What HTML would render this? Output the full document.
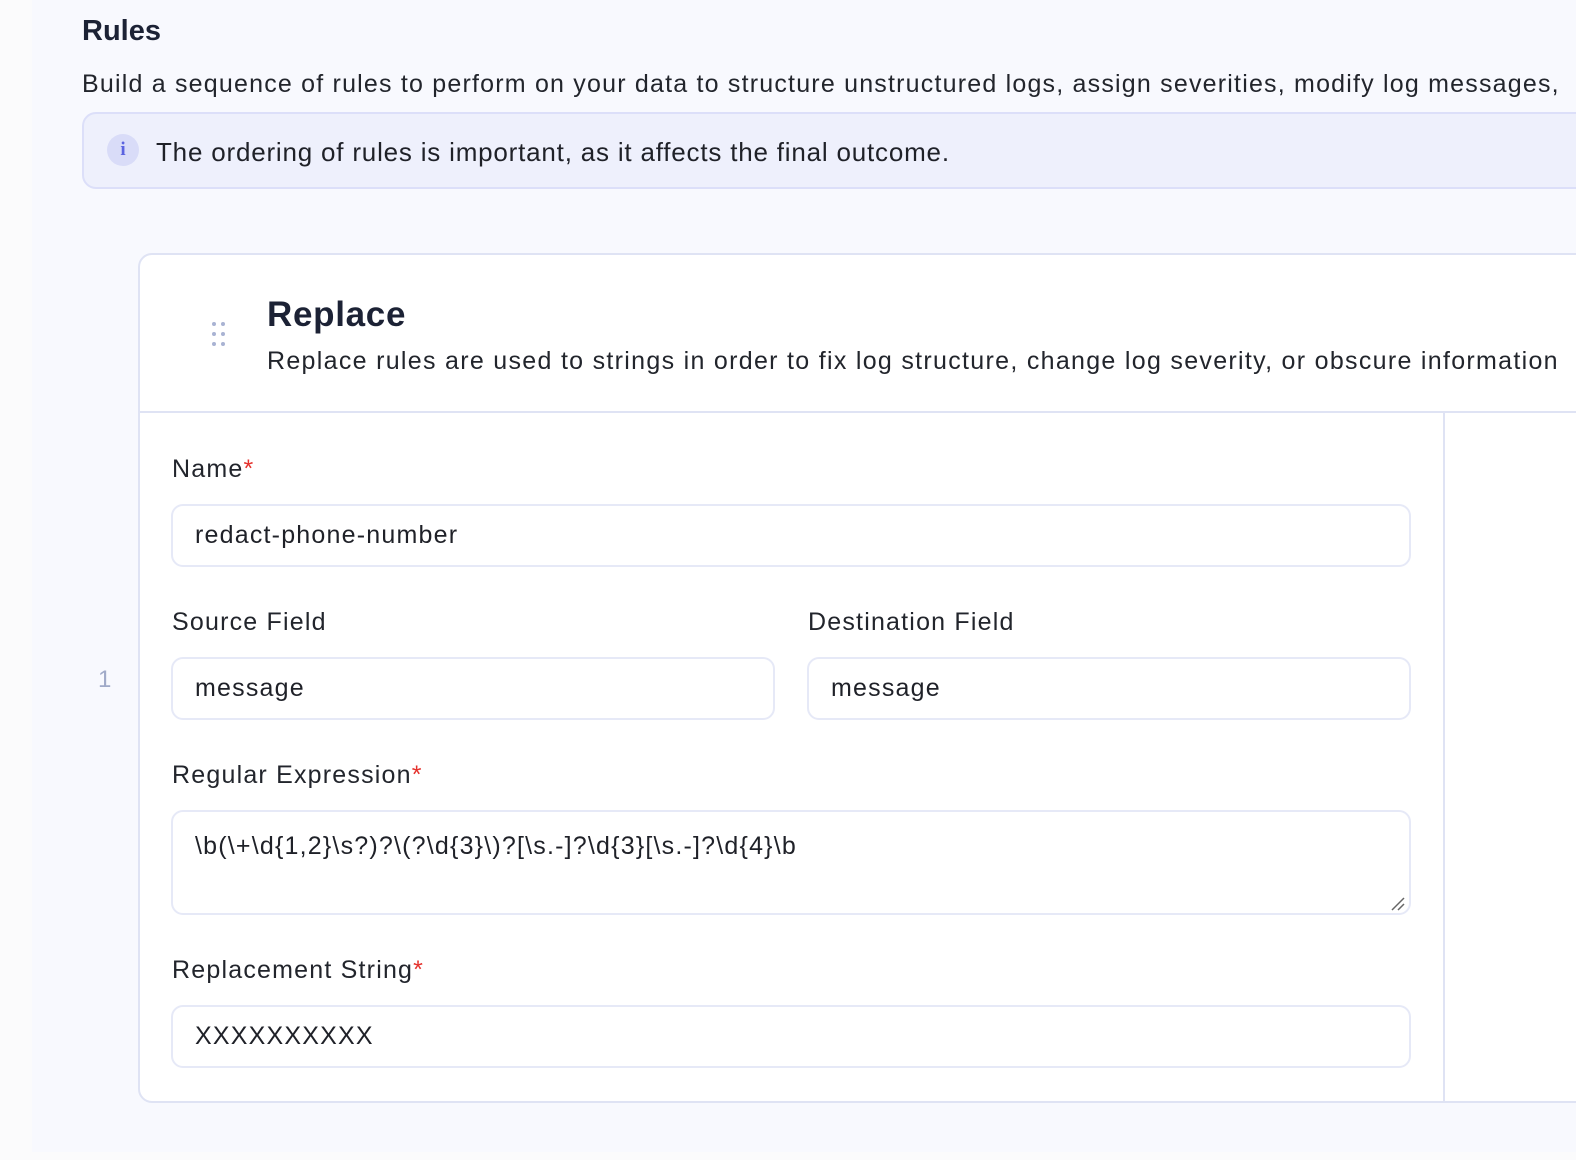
<!DOCTYPE html>
<html><head><meta charset="utf-8"><style>
*{margin:0;padding:0;box-sizing:border-box}
body{width:1576px;height:1160px;overflow:hidden;background:#fbfbfc;font-family:"Liberation Sans",sans-serif;color:#1f2128;position:relative}
.main{position:absolute;left:32px;top:0;width:1544px;height:1152px;background:#f8f9fe}
.a{position:absolute;white-space:nowrap}
.lbl{font-size:25px;color:#22252c;letter-spacing:1.2px}
.lbl b{color:#e5322d;font-weight:normal}
.inp{position:absolute;background:#fff;border:2px solid #e6e9f7;border-radius:12px;font-size:25px;letter-spacing:1.2px;padding-left:22px;display:flex;align-items:center;color:#1f2128}
</style></head><body>
<div class="main"></div>
<div class="a" style="left:82px;top:15px;font-size:29px;font-weight:bold;color:#1c2235">Rules</div>
<div class="a" style="left:82px;top:70px;font-size:25px;letter-spacing:1.2px;color:#22252c">Build a sequence of rules to perform on your data to structure unstructured logs, assign severities, modify log messages,</div>
<div class="a" style="left:82px;top:112px;width:1520px;height:77px;background:#eef0fc;border:2px solid #dcdff9;border-radius:14px"></div>
<div class="a" style="left:107px;top:134px;width:32px;height:32px;border-radius:50%;background:#d9dcf8;color:#5b63e0;font-size:19px;font-weight:bold;text-align:center;line-height:32px;font-family:'Liberation Serif',serif">i</div>
<div class="a" style="left:156px;top:137px;font-size:26px;letter-spacing:0.8px;color:#1f2128">The ordering of rules is important, as it affects the final outcome.</div>
<div class="a" style="left:138px;top:253px;width:1460px;height:850px;background:#fff;border:2px solid #dfe3f4;border-radius:14px"></div>
<div class="a" style="left:140px;top:411px;width:1436px;height:2px;background:#dfe3f4"></div>
<div class="a" style="left:1443px;top:413px;width:2px;height:688px;background:#dfe3f4"></div>
<svg class="a" style="left:210px;top:320px" width="18" height="28"><g fill="#a9b3d3"><circle cx="4" cy="4" r="2"/><circle cx="13" cy="4" r="2"/><circle cx="4" cy="14" r="2"/><circle cx="13" cy="14" r="2"/><circle cx="4" cy="24" r="2"/><circle cx="13" cy="24" r="2"/></g></svg>
<div class="a" style="left:267px;top:295px;font-size:35px;font-weight:bold;letter-spacing:0.7px;color:#1c2235">Replace</div>
<div class="a" style="left:267px;top:347px;font-size:25px;letter-spacing:1.3px;color:#22252c">Replace rules are used to strings in order to fix log structure, change log severity, or obscure information</div>
<div class="a" style="left:98px;top:666px;font-size:24px;color:#a0aac8">1</div>
<div class="a lbl" style="left:172px;top:455px">Name<b>*</b></div>
<div class="inp" style="left:171px;top:504px;width:1240px;height:63px">redact-phone-number</div>
<div class="a lbl" style="left:172px;top:608px">Source Field</div>
<div class="a lbl" style="left:808px;top:608px">Destination Field</div>
<div class="inp" style="left:171px;top:657px;width:604px;height:63px">message</div>
<div class="inp" style="left:807px;top:657px;width:604px;height:63px">message</div>
<div class="a lbl" style="left:172px;top:761px">Regular Expression<b>*</b></div>
<div class="inp" style="left:171px;top:810px;width:1240px;height:105px;align-items:flex-start;padding-top:20px">\b(\+\d{1,2}\s?)?\(?\d{3}\)?[\s.-]?\d{3}[\s.-]?\d{4}\b</div>
<svg class="a" style="left:1390px;top:896px" width="16" height="16"><path d="M2 14L14 2M8 14L14 8" stroke="#666" stroke-width="1.5"/></svg>
<div class="a lbl" style="left:172px;top:956px">Replacement String<b>*</b></div>
<div class="inp" style="left:171px;top:1005px;width:1240px;height:63px">XXXXXXXXXX</div>
</body></html>
